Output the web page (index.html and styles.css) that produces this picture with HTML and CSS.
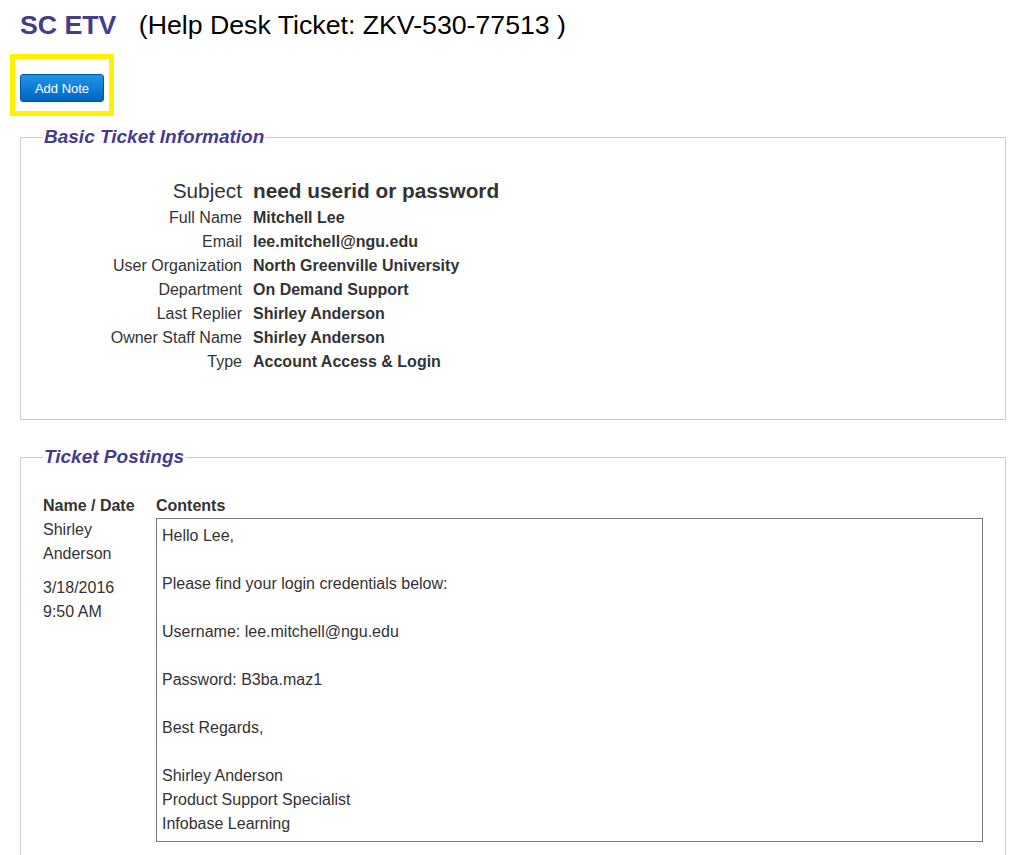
FILE: index.html
```
<!DOCTYPE html>
<html lang="en">
<head>
    <meta charset="UTF-8">
    <title>SC ETV - Help Desk Ticket ZKV-530-77513</title>
    <link rel="stylesheet" href="styles.css">
</head>
<body>
    <h1 class="page-title"><span class="org">SC ETV</span> (Help Desk Ticket: ZKV-530-77513 )</h1>

    <div class="highlight">
        <button class="btn-note">Add Note</button>
    </div>

    <fieldset class="panel">
        <legend>Basic Ticket Information</legend>
        <div class="info-grid">
            <div class="label subject">Subject</div>
            <div class="value subject">need userid or password</div>
            <div class="label">Full Name</div>
            <div class="value">Mitchell Lee</div>
            <div class="label">Email</div>
            <div class="value">lee.mitchell@ngu.edu</div>
            <div class="label">User Organization</div>
            <div class="value">North Greenville University</div>
            <div class="label">Department</div>
            <div class="value">On Demand Support</div>
            <div class="label">Last Replier</div>
            <div class="value">Shirley Anderson</div>
            <div class="label">Owner Staff Name</div>
            <div class="value">Shirley Anderson</div>
            <div class="label">Type</div>
            <div class="value">Account Access &amp; Login</div>
        </div>
    </fieldset>

    <fieldset class="panel postings">
        <legend>Ticket Postings</legend>
        <div class="post-grid">
            <div class="head">Name / Date</div>
            <div class="head">Contents</div>
            <div class="poster">
                <div class="name">Shirley Anderson</div>
                <div class="date">3/18/2016<br>9:50 AM</div>
            </div>
            <div class="contents">Hello Lee,

Please find your login credentials below:

Username: lee.mitchell@ngu.edu

Password: B3ba.maz1

Best Regards,

Shirley Anderson
Product Support Specialist
Infobase Learning</div>
        </div>
    </fieldset>
</body>
</html>
```

FILE: styles.css
```
body {
    margin: 0;
    padding: 0 22px 0 20px;
    font-family: "Liberation Sans", Arial, sans-serif;
    font-size: 16px;
    color: #333;
    background: #fff;
}
.page-title {
    margin: 0;
    padding-top: 8px;
    height: 40px;
    font-size: 26.7px;
    font-weight: normal;
    line-height: 34px;
    color: #000;
}
.page-title .org {
    font-weight: bold;
    color: #463c8c;
    margin-right: 15px;
}
.highlight {
    display: inline-block;
    margin: 6px 0 0 -10px;
    padding: 15px 5px 9px 5px;
    border: 5px solid #fff200;
}
.btn-note {
    display: block;
    width: 84px;
    height: 28px;
    padding: 0;
    border: 1px solid #0055a8;
    border-radius: 3px;
    background: linear-gradient(#2196e8, #0062c4);
    color: #fff;
    font-family: "Liberation Sans", Arial, sans-serif;
    font-size: 13px;
    cursor: pointer;
}
.panel {
    margin: 10px 0 0 0;
    padding: 27px 22px 45px 22px;
    border: 1px solid #ccc;
}
.panel legend {
    padding: 0 1px;
    font-size: 19px;
    font-weight: bold;
    font-style: italic;
    line-height: 22px;
    color: #463c8c;
}
.info-grid {
    display: grid;
    grid-template-columns: 199px 1fr;
    column-gap: 11px;
    line-height: 24px;
}
.info-grid .label {
    text-align: right;
}
.info-grid .value {
    font-weight: bold;
}
.info-grid .subject {
    font-size: 20.8px;
    line-height: 31px;
}
.postings {
    margin-top: 26px;
    padding-top: 26px;
    padding-bottom: 20px;
}
.post-grid {
    display: grid;
    grid-template-columns: 113px 1fr;
    line-height: 24px;
}
.post-grid .head {
    font-weight: bold;
}
.poster .date {
    margin-top: 10px;
}
.contents {
    white-space: pre-line;
    border: 1px solid #777;
    padding: 5px 5px 5px 5px;
}
```
